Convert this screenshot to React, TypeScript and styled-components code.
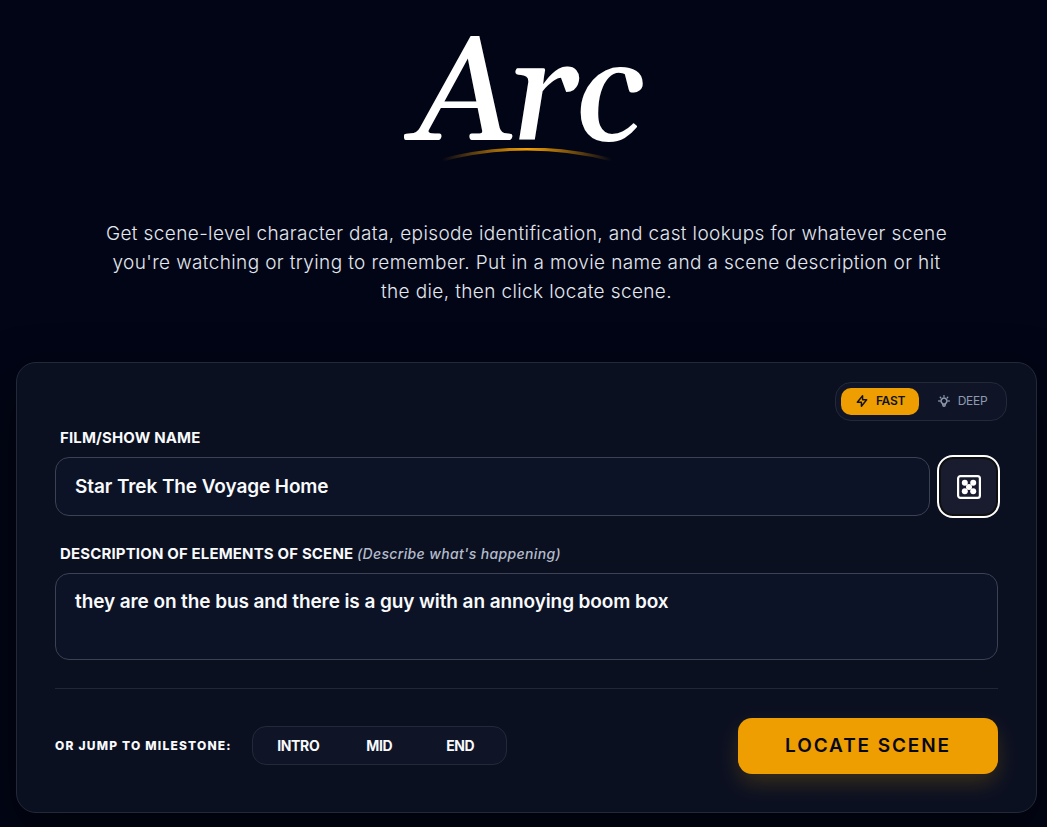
import React, { useState } from "react";
import styled, { createGlobalStyle } from "styled-components";

const GlobalStyle = createGlobalStyle`
  *, *::before, *::after { box-sizing: border-box; }
  body {
    margin: 0;
    background: #020515;
    color: #f8fafc;
    font-family: Inter, "Liberation Sans", sans-serif;
  }
  button, input, textarea { font-family: inherit; }
`;

const Page = styled.main`
  min-height: 100vh;
  padding: 0 10px 14px 16px;
  background: #020515;
`;

const Hero = styled.header`
  display: flex;
  flex-direction: column;
  align-items: center;
  text-align: center;
`;

const Logo = styled.h1`
  margin: 0;
  padding-top: 10px;
  font-family: Georgia, Gelasio, "Liberation Serif", serif;
  font-size: 148px;
  font-style: italic;
  font-weight: 500;
  line-height: 174px;
  letter-spacing: -0.025em;
  color: #fff;
`;

const Arc = styled.svg`
  display: block;
  width: 180px;
  height: 16px;
  margin-top: -36px;
`;

const Intro = styled.p`
  max-width: 860px;
  margin: 55px 0 56px;
  font-size: 19px;
  font-weight: 300;
  line-height: 29px;
  letter-spacing: 0.02em;
  color: #e2e8f0;
`;

const Card = styled.form`
  display: flex;
  flex-direction: column;
  padding: 19px 29px 38px;
  border: 1px solid #24293a;
  border-radius: 20px;
  background: #0b1021;
  box-shadow: 0 20px 50px rgba(0, 0, 0, 0.5);
`;

const ModeSwitch = styled.div`
  display: flex;
  align-self: flex-end;
  gap: 4px;
  padding: 5px;
  border: 1px solid #24293a;
  border-radius: 16px;
  background: #0f1527;
`;

const ModeButton = styled.button<{ $active: boolean }>`
  display: flex;
  align-items: center;
  justify-content: center;
  gap: 7px;
  width: 78px;
  height: 27px;
  padding: 0 0 2px;
  border: 0;
  border-radius: 10px;
  background: ${(p) => (p.$active ? "#ee9e00" : "transparent")};
  color: ${(p) => (p.$active ? "#111318" : "#8e9ab0")};
  font-size: 12px;
  font-weight: ${(p) => (p.$active ? 600 : 400)};
  letter-spacing: -0.025em;
  cursor: pointer;
`;

const Fields = styled.div`
  display: flex;
  flex-direction: column;
  padding: 7px 9px 0;
`;

const Label = styled.label`
  padding-left: 5px;
  font-size: 15px;
  font-weight: 700;
  line-height: 20px;
  letter-spacing: 0.01em;
`;

const Hint = styled.em`
  font-size: 14px;
  font-weight: 500;
  letter-spacing: 0.025em;
  color: #b4bccb;
`;

const TitleRow = styled.div`
  display: flex;
  gap: 9px;
  margin: 9px 0 28px;
`;

const TextInput = styled.input`
  flex: 1;
  min-width: 0;
  height: 59px;
  padding: 0 19px;
  border: 1px solid #3c4252;
  border-radius: 14px;
  outline: 0;
  background: #0d1326;
  color: #f8fafc;
  font-size: 19px;
  font-weight: 600;
  letter-spacing: -0.005em;
`;

const TextArea = styled.textarea`
  display: block;
  width: 100%;
  height: 87px;
  margin-top: 9px;
  padding: 14px 19px;
  border: 1px solid #3c4252;
  border-radius: 14px;
  outline: 0;
  resize: none;
  background: #0d1326;
  color: #f8fafc;
  font-size: 19px;
  font-weight: 600;
  line-height: 28px;
  letter-spacing: -0.005em;
`;

const DiceButton = styled.button`
  display: grid;
  place-items: center;
  width: 59px;
  height: 59px;
  padding: 0;
  border: 2px solid #101010;
  border-radius: 14px;
  outline: 2px solid #fff;
  background: #181c2e;
  color: #fff;
  cursor: pointer;
`;

const Footer = styled.div`
  display: flex;
  align-items: center;
  justify-content: space-between;
  margin-top: 28px;
  padding-top: 29px;
  border-top: 1px solid #222738;
`;

const Milestones = styled.div`
  display: flex;
  align-items: center;
  gap: 20px;
  padding-bottom: 1px;
`;

const MilestoneLabel = styled.span`
  font-size: 12px;
  font-weight: 800;
  letter-spacing: 0.1em;
`;

const MilestoneGroup = styled.div`
  display: grid;
  grid-template-columns: repeat(3, 1fr);
  padding: 5px;
  border: 1px solid #24293a;
  border-radius: 14px;
  background: #0f1527;
`;

const MilestoneButton = styled.button`
  min-width: 81px;
  height: 27px;
  padding: 0;
  border: 0;
  border-radius: 10px;
  background: transparent;
  color: #f8fafc;
  font-size: 14px;
  font-weight: 700;
  letter-spacing: -0.025em;
  cursor: pointer;
`;

const LocateButton = styled.button`
  width: 260px;
  height: 56px;
  padding: 0 0 2px;
  border: 0;
  border-radius: 14px;
  background: #ee9e00;
  box-shadow: 0 10px 22px -2px rgba(238, 158, 0, 0.22);
  color: #050817;
  font-size: 19px;
  font-weight: 600;
  letter-spacing: 0.1em;
  cursor: pointer;
`;

const BoltIcon = () => (
  <svg width="14" height="14" viewBox="0 0 24 24" fill="none" stroke="currentColor" strokeWidth="2.5" strokeLinejoin="round" strokeLinecap="round" aria-hidden="true">
    <path d="M13 10V3L4 14h7v7l9-11h-7z" />
  </svg>
);

const BulbIcon = () => (
  <svg width="14" height="14" viewBox="0 0 24 24" fill="none" stroke="currentColor" strokeWidth="2.5" strokeLinejoin="round" strokeLinecap="round" aria-hidden="true">
    <path d="M9.663 17h4.673M12 3v1m6.364 1.636l-.707.707M21 12h-1M4 12H3m3.343-5.657l-.707-.707m2.828 9.9a5 5 0 117.072 0l-.548.547A3.374 3.374 0 0014 18.469V19a2 2 0 11-4 0v-.531c0-.895-.356-1.754-.988-2.386l-.548-.547z" />
  </svg>
);

const DiceIcon = () => (
  <svg width="24" height="24" viewBox="0 0 24 24" aria-hidden="true">
    <rect x="1.1" y="1.1" width="21.8" height="21.8" rx="2.4" fill="none" stroke="currentColor" strokeWidth="2.2" />
    <g fill="currentColor">
      <circle cx="7.8" cy="7.8" r="3" />
      <circle cx="16.2" cy="7.8" r="3" />
      <circle cx="12" cy="12" r="3" />
      <circle cx="7.8" cy="16.2" r="3" />
      <circle cx="16.2" cy="16.2" r="3" />
    </g>
  </svg>
);

export default function App() {
  const [mode, setMode] = useState("fast");
  const [title, setTitle] = useState("Star Trek The Voyage Home");
  const [scene, setScene] = useState("they are on the bus and there is a guy with an annoying boom box");

  return (
    <>
      <GlobalStyle />
      <Page>
        <Hero>
          <Logo>Arc</Logo>
          <Arc viewBox="0 0 180 16" aria-hidden="true">
            <defs>
              <linearGradient id="glow" x1="0" x2="1" y1="0" y2="0">
                <stop offset="0" stopColor="#f59e0b" stopOpacity="0" />
                <stop offset="0.5" stopColor="#f5a000" />
                <stop offset="1" stopColor="#f59e0b" stopOpacity="0" />
              </linearGradient>
            </defs>
            <path d="M5 12Q90 -10 175 12" fill="none" stroke="url(#glow)" strokeWidth="3" />
          </Arc>
          <Intro>
            Get scene-level character data, episode identification, and cast lookups for whatever scene you're
            watching or trying to remember. Put in a movie name and a scene description or hit the die, then click
            locate scene.
          </Intro>
        </Hero>

        <Card onSubmit={(e) => e.preventDefault()}>
          <ModeSwitch role="group" aria-label="Search mode">
            <ModeButton type="button" $active={mode === "fast"} aria-pressed={mode === "fast"} onClick={() => setMode("fast")}>
              <BoltIcon />
              FAST
            </ModeButton>
            <ModeButton type="button" $active={mode === "deep"} aria-pressed={mode === "deep"} onClick={() => setMode("deep")}>
              <BulbIcon />
              DEEP
            </ModeButton>
          </ModeSwitch>

          <Fields>
            <Label htmlFor="title">FILM/SHOW NAME</Label>
            <TitleRow>
              <TextInput id="title" value={title} onChange={(e) => setTitle(e.target.value)} />
              <DiceButton type="button" aria-label="Random scene">
                <DiceIcon />
              </DiceButton>
            </TitleRow>

            <Label htmlFor="scene">
              DESCRIPTION OF ELEMENTS OF SCENE <Hint>(Describe what's happening)</Hint>
            </Label>
            <TextArea id="scene" value={scene} onChange={(e) => setScene(e.target.value)} />

            <Footer>
              <Milestones>
                <MilestoneLabel id="milestone">OR JUMP TO MILESTONE:</MilestoneLabel>
                <MilestoneGroup role="group" aria-labelledby="milestone">
                  <MilestoneButton type="button">INTRO</MilestoneButton>
                  <MilestoneButton type="button">MID</MilestoneButton>
                  <MilestoneButton type="button">END</MilestoneButton>
                </MilestoneGroup>
              </Milestones>
              <LocateButton type="submit">LOCATE SCENE</LocateButton>
            </Footer>
          </Fields>
        </Card>
      </Page>
    </>
  );
}
